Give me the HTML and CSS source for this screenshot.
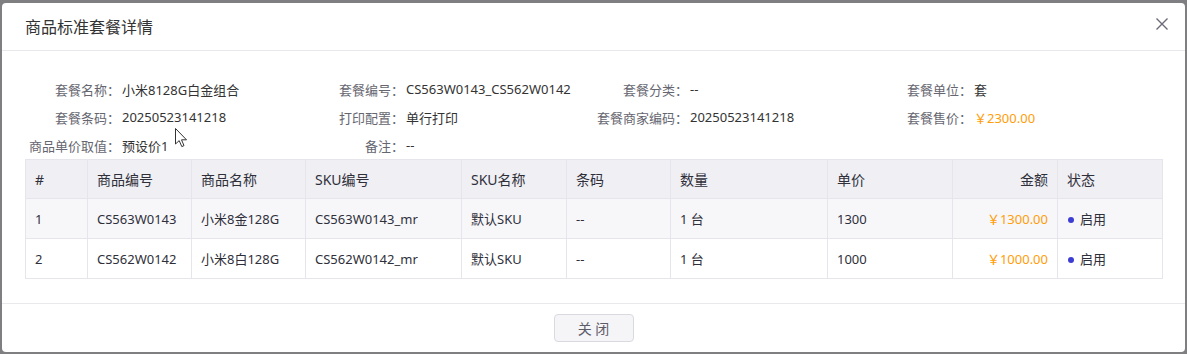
FILE: index.html
```html
<!DOCTYPE html>
<html lang="zh-CN">
<head>
    <meta charset="UTF-8">
    <meta name="viewport" content="width=device-width, initial-scale=1.0">
    <title>商品标准套餐详情</title>
    <link rel="stylesheet" href="styles.css">
</head>
<body>
    <div class="modal">
        <div class="modal-header">
            <div class="modal-title">商品标准套餐详情</div>
            <span class="modal-close">
                <svg viewBox="0 0 12 12" width="12" height="12">
                    <path d="M0.5 0.5 L11.5 11.5 M11.5 0.5 L0.5 11.5" stroke="currentColor" stroke-width="1.4" fill="none"/>
                </svg>
            </span>
        </div>

        <div class="modal-body">
            <div class="info-grid">
                <div class="info-item"><span class="info-label">套餐名称：</span><span class="info-value">小米8128G白金组合</span></div>
                <div class="info-item"><span class="info-label">套餐编号：</span><span class="info-value">CS563W0143_CS562W0142</span></div>
                <div class="info-item"><span class="info-label">套餐分类：</span><span class="info-value">--</span></div>
                <div class="info-item"><span class="info-label">套餐单位：</span><span class="info-value">套</span></div>

                <div class="info-item"><span class="info-label">套餐条码：</span><span class="info-value">20250523141218</span></div>
                <div class="info-item"><span class="info-label">打印配置：</span><span class="info-value">单行打印</span></div>
                <div class="info-item"><span class="info-label">套餐商家编码：</span><span class="info-value">20250523141218</span></div>
                <div class="info-item"><span class="info-label">套餐售价：</span><span class="info-value price">￥2300.00</span></div>

                <div class="info-item"><span class="info-label">商品单价取值：</span><span class="info-value">预设价1</span></div>
                <div class="info-item"><span class="info-label">备注：</span><span class="info-value">--</span></div>
            </div>

            <table class="detail-table">
                <colgroup>
                    <col style="width: 62px">
                    <col style="width: 104px">
                    <col style="width: 114px">
                    <col style="width: 156px">
                    <col style="width: 105px">
                    <col style="width: 104px">
                    <col style="width: 157px">
                    <col style="width: 125px">
                    <col style="width: 105px">
                    <col style="width: 105px">
                </colgroup>
                <thead>
                    <tr>
                        <th>#</th>
                        <th>商品编号</th>
                        <th>商品名称</th>
                        <th>SKU编号</th>
                        <th>SKU名称</th>
                        <th>条码</th>
                        <th>数量</th>
                        <th>单价</th>
                        <th class="align-right">金额</th>
                        <th>状态</th>
                    </tr>
                </thead>
                <tbody>
                    <tr>
                        <td>1</td>
                        <td>CS563W0143</td>
                        <td>小米8金128G</td>
                        <td>CS563W0143_mr</td>
                        <td>默认SKU</td>
                        <td>--</td>
                        <td>1 台</td>
                        <td>1300</td>
                        <td class="align-right price">￥1300.00</td>
                        <td><span class="status-dot"></span>启用</td>
                    </tr>
                    <tr>
                        <td>2</td>
                        <td>CS562W0142</td>
                        <td>小米8白128G</td>
                        <td>CS562W0142_mr</td>
                        <td>默认SKU</td>
                        <td>--</td>
                        <td>1 台</td>
                        <td>1000</td>
                        <td class="align-right price">￥1000.00</td>
                        <td><span class="status-dot"></span>启用</td>
                    </tr>
                </tbody>
            </table>
        </div>

        <div class="modal-footer">
            <button class="btn-close">关 闭</button>
        </div>
    </div>

    <!-- mouse pointer captured in the screenshot -->
    <svg class="cursor" viewBox="0 0 13 20" width="13" height="20">
        <path d="M0.5 0.5 L0.5 16 L4.2 12.6 L6.8 18.6 L9 17.6 L6.5 11.8 L11.5 11.8 Z" fill="#fff" stroke="#333" stroke-width="1" stroke-linejoin="round"/>
    </svg>
</body>
</html>
```

FILE: styles.css
```css
* {
    margin: 0;
    padding: 0;
    box-sizing: border-box;
}

body {
    font-family: 'Noto Sans', 'Noto Sans CJK SC', sans-serif;
    background: #7f7f82;
    width: 1187px;
    height: 354px;
    overflow: hidden;
    position: relative;
    color: #333;
}

.modal {
    margin: 3px 2px 0 2px;
    width: 1183px;
    height: 349px;
    background: #fff;
    border-radius: 4px;
    display: flex;
    flex-direction: column;
}

.modal-header {
    height: 48px;
    padding: 0 17px 2px 23px;
    border-bottom: 1px solid #e8e8ed;
    display: flex;
    align-items: center;
    justify-content: space-between;
}

.modal-title {
    font-size: 16px;
    color: #333;
}

.modal-close {
    color: #6b6b78;
    display: flex;
    margin-top: -3px;
}

.modal-body {
    flex: 1;
    padding: 24px 23px 0 23px;
}

.info-grid {
    display: grid;
    grid-template-columns: repeat(4, 284px);
    grid-auto-rows: 28px;
    font-size: 13px;
}

.info-item {
    display: flex;
    align-items: center;
}

.info-label {
    width: 95px;
    text-align: right;
    color: #666670;
    white-space: nowrap;
}

.info-value {
    color: #333;
    padding-left: 2px;
    white-space: nowrap;
}

.price {
    color: #ff9d0a;
}

.detail-table {
    width: 1137px;
    table-layout: fixed;
    border-collapse: collapse;
    font-size: 13px;
}

.detail-table th,
.detail-table td {
    border: 1px solid #e5e5eb;
    height: 40px;
    padding: 0 9px;
    text-align: left;
    white-space: nowrap;
    color: #2f2f3a;
}

.detail-table th {
    background: #f0f0f4;
    font-weight: normal;
    font-size: 14px;
    height: 39px;
}

.detail-table tbody tr:nth-child(odd) td {
    background: #f7f7fa;
}

.detail-table td.price {
    color: #ff9d0a;
}

.align-right {
    text-align: right !important;
}

.status-dot {
    display: inline-block;
    width: 6px;
    height: 6px;
    border-radius: 50%;
    background: #3d3dd4;
    margin: 0 6px 2px 1px;
    vertical-align: middle;
}

.modal-footer {
    height: 49px;
    border-top: 1px solid #e8e8ed;
    display: flex;
    justify-content: center;
    padding-top: 10px;
}

.btn-close {
    width: 80px;
    height: 28px;
    background: #f5f5f8;
    border: 1px solid #d9d9e0;
    border-radius: 4px;
    color: #5c5c68;
    font-family: inherit;
    font-size: 14px;
}

.cursor {
    position: absolute;
    left: 175px;
    top: 128px;
}
```
